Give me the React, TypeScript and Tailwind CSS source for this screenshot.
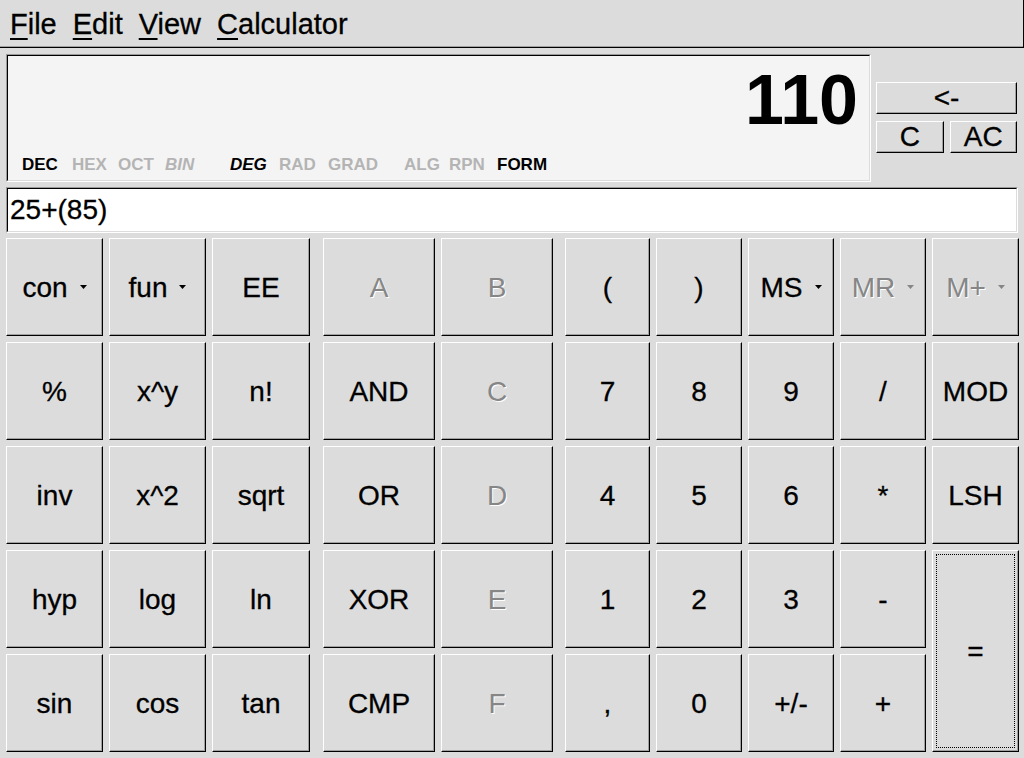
import React from 'react';

type Key = { label: string; drop?: boolean; off?: boolean; focus?: boolean; span?: boolean };

const groupA: Key[] = [
  { label: 'con', drop: true }, { label: 'fun', drop: true }, { label: 'EE' },
  { label: '%' }, { label: 'x^y' }, { label: 'n!' },
  { label: 'inv' }, { label: 'x^2' }, { label: 'sqrt' },
  { label: 'hyp' }, { label: 'log' }, { label: 'ln' },
  { label: 'sin' }, { label: 'cos' }, { label: 'tan' },
];

const groupB: Key[] = [
  { label: 'A', off: true }, { label: 'B', off: true },
  { label: 'AND' }, { label: 'C', off: true },
  { label: 'OR' }, { label: 'D', off: true },
  { label: 'XOR' }, { label: 'E', off: true },
  { label: 'CMP' }, { label: 'F', off: true },
];

const groupC: Key[] = [
  { label: '(' }, { label: ')' }, { label: 'MS', drop: true }, { label: 'MR', drop: true, off: true }, { label: 'M+', drop: true, off: true },
  { label: '7' }, { label: '8' }, { label: '9' }, { label: '/' }, { label: 'MOD' },
  { label: '4' }, { label: '5' }, { label: '6' }, { label: '*' }, { label: 'LSH' },
  { label: '1' }, { label: '2' }, { label: '3' }, { label: '-' }, { label: '=', span: true, focus: true },
  { label: ',' }, { label: '0' }, { label: '+/-' }, { label: '+' },
];

const status = [
  { t: 'DEC', on: true, w: 'w-[50px]' },
  { t: 'HEX', w: 'w-[46px]' },
  { t: 'OCT', w: 'w-[47px]' },
  { t: 'BIN', w: 'w-[65px]', it: true },
  { t: 'DEG', on: true, w: 'w-[49px]', it: true },
  { t: 'RAD', w: 'w-[49px]' },
  { t: 'GRAD', w: 'w-[76px]' },
  { t: 'ALG', w: 'w-[45px]' },
  { t: 'RPN', w: 'w-[48px]' },
  { t: 'FORM', on: true, w: '' },
];

const raised =
  'border border-t-white border-l-white border-b-black border-r-black shadow-[inset_-1px_-1px_0_#a0a0a0] bg-[#dcdcdc]';
const heavy = '[-webkit-text-stroke:0.3px_#000]';

function Btn({ k }: { k: Key }) {
  return (
    <div className={`${raised} relative flex items-center justify-center gap-[12px] pt-[2px] ${k.span ? 'row-span-2' : ''}`}>
      {k.focus && <div className="absolute inset-[3px] border border-dotted border-black" />}
      <span className={k.off ? 'text-[#868686] [text-shadow:1px_1px_0_#ffffff]' : `text-black ${heavy}`}>{k.label}</span>
      {k.drop && (
        <svg width="7" height="4" viewBox="0 0 7 4" className="mb-[2px]">
          <path d="M0 0h7L3.5 4z" fill={k.off ? '#868686' : '#000'} />
        </svg>
      )}
    </div>
  );
}

export default function App() {
  return (
    <div className="w-[1024px] h-[758px] bg-[#dcdcdc] font-['Liberation_Sans',Arial,sans-serif] text-black overflow-hidden">
      {/* menu bar */}
      <div className={`h-[48px] flex items-center gap-[16px] pl-[10px] pt-[3px] text-[29px] border-b border-r border-black shadow-[inset_0_-1px_0_#a0a0a0] ${heavy}`}>
        {['File', 'Edit', 'View', 'Calculator'].map(m => (
          <span key={m}>
            <span className="underline decoration-2 underline-offset-[4px]">{m[0]}</span>
            {m.slice(1)}
          </span>
        ))}
      </div>

      <div className="px-[6px] pt-[6px]">
        <div className="flex gap-[5px] h-[128px]">
          {/* display */}
          <div className="w-[865px] border border-t-[#9a9a9a] border-l-[#9a9a9a] border-b-white border-r-white">
            <div className="h-full border border-t-black border-l-black border-b-[#dcdcdc] border-r-[#dcdcdc] bg-[#f4f4f4] flex flex-col">
              <div className="mt-[9px] pr-[11px] text-right font-bold text-[70px] leading-none">110</div>
              <div className="mt-[21px] pl-[14px] flex text-[17px] leading-none font-bold">
                {status.map(s => (
                  <span key={s.t} className={`${s.w} ${s.on ? 'text-black' : 'text-[#b4b4b4]'} ${s.it ? 'italic' : ''}`}>
                    {s.t}
                  </span>
                ))}
              </div>
            </div>
          </div>
          {/* edit keys */}
          <div className={`flex-1 pt-[28px] pr-[1px] flex flex-col gap-[7px] text-[28px] ${heavy}`}>
            <div className={`${raised} h-[32px] flex items-center justify-center`}>&lt;-</div>
            <div className="flex gap-[6px]">
              <div className={`${raised} h-[32px] flex-1 flex items-center justify-center`}>C</div>
              <div className={`${raised} h-[32px] flex-1 flex items-center justify-center`}>AC</div>
            </div>
          </div>
        </div>

        {/* input line */}
        <div className="mt-[5px] h-[46px] w-[1012px] border border-t-[#9a9a9a] border-l-[#9a9a9a] border-b-white border-r-white">
          <div className={`h-full border border-t-black border-l-black border-b-[#dcdcdc] border-r-[#dcdcdc] bg-white flex items-center pl-[2px] text-[28px] ${heavy}`}>
            25+(85)
          </div>
        </div>

        {/* keypad */}
        <div className="mt-[5px] flex text-[28px]">
          <div className="grid grid-cols-[97px_97px_98px] grid-rows-[repeat(5,98px)] gap-[6px]">
            {groupA.map((k, i) => <Btn key={i} k={k} />)}
          </div>
          <div className="ml-[13px] grid grid-cols-[112px_112px] grid-rows-[repeat(5,98px)] gap-[6px]">
            {groupB.map((k, i) => <Btn key={i} k={k} />)}
          </div>
          <div className="ml-[12px] grid grid-cols-[85px_86px_86px_86px_87px] grid-rows-[repeat(5,98px)] gap-[6px]">
            {groupC.map((k, i) => <Btn key={i} k={k} />)}
          </div>
        </div>
      </div>
    </div>
  );
}
